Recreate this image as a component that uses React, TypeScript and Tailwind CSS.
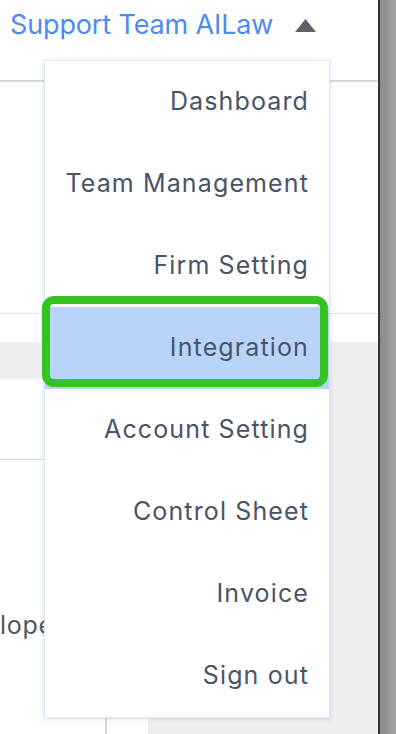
import { useState } from "react";

const menuItems = [
  "Dashboard",
  "Team Management",
  "Firm Setting",
  "Integration",
  "Account Setting",
  "Control Sheet",
  "Invoice",
  "Sign out",
];

const UserMenu = () => {
  const [active] = useState("Integration");

  return (
    <div className="absolute left-[44px] top-[60px] w-[286px] bg-white border border-[#dde7fa] shadow-[0_1px_4px_rgba(120,160,235,0.35)]">
      {menuItems.map((item) => (
        <div
          key={item}
          className={`h-[82px] flex items-center justify-end pr-[20px] text-[25px] tracking-[0.045em] text-[#4a5468] ${
            item === active ? "bg-[#b8d4fb]" : "bg-white"
          }`}
        >
          {item}
        </div>
      ))}
    </div>
  );
};

export default function App() {
  return (
    <div
      className="relative w-[396px] h-[734px] overflow-hidden flex bg-white"
      style={{ fontFamily: "Inter, 'Liberation Sans', sans-serif" }}
    >
      {/* page behind the menu */}
      <div className="relative w-[378px] h-full flex flex-col">
        <div className="h-[80px] flex items-start pt-[11px] pl-[10px] gap-[22px]">
          <span className="text-[27px] leading-[28px] tracking-[-0.005em] text-[#4d8af3]">
            Support Team AILaw
          </span>
          <svg width="21" height="13" viewBox="0 0 21 13" className="mt-[8px]">
            <polygon points="10.5,0 21,13 0,13" fill="#5e6169" />
          </svg>
        </div>
        <div className="h-[2px] bg-[#d9d9d9]" />
        <div className="h-[232px] border-b border-[#e6e6e6]" />
        <div className="h-[28px]" />

        <div className="flex-1 flex">
          <div className="w-[330px] flex flex-col">
            <div className="h-[37px] bg-[#efefef]" />
            <div className="h-[81px] border-b border-[#dedede]" />
            <div className="h-[180px] flex items-end">
              <span className="text-[25px] leading-[30px] tracking-[0.03em] text-[#555555]">
                lopers
              </span>
            </div>
            <div className="flex-1 flex mt-[74px]">
              <div className="w-[107px] border-r-2 border-[#d6d6d6]" />
              <div className="w-[41px]" />
              <div className="flex-1 bg-[#efefef]" />
            </div>
          </div>
          <div className="flex-1 bg-[#efefef]" />
        </div>

        <UserMenu />

        {/* highlight annotation */}
        <div className="absolute left-[42px] top-[296px] w-[286px] h-[91px] border-[8px] border-[#33c421] rounded-[12px]" />
      </div>

      {/* window edge */}
      <div className="w-[2px] h-full bg-[#333333]" />
      <div className="flex-1 h-full bg-gradient-to-r from-[#8a8a8a] to-[#a6a6a6]" />
    </div>
  );
}
